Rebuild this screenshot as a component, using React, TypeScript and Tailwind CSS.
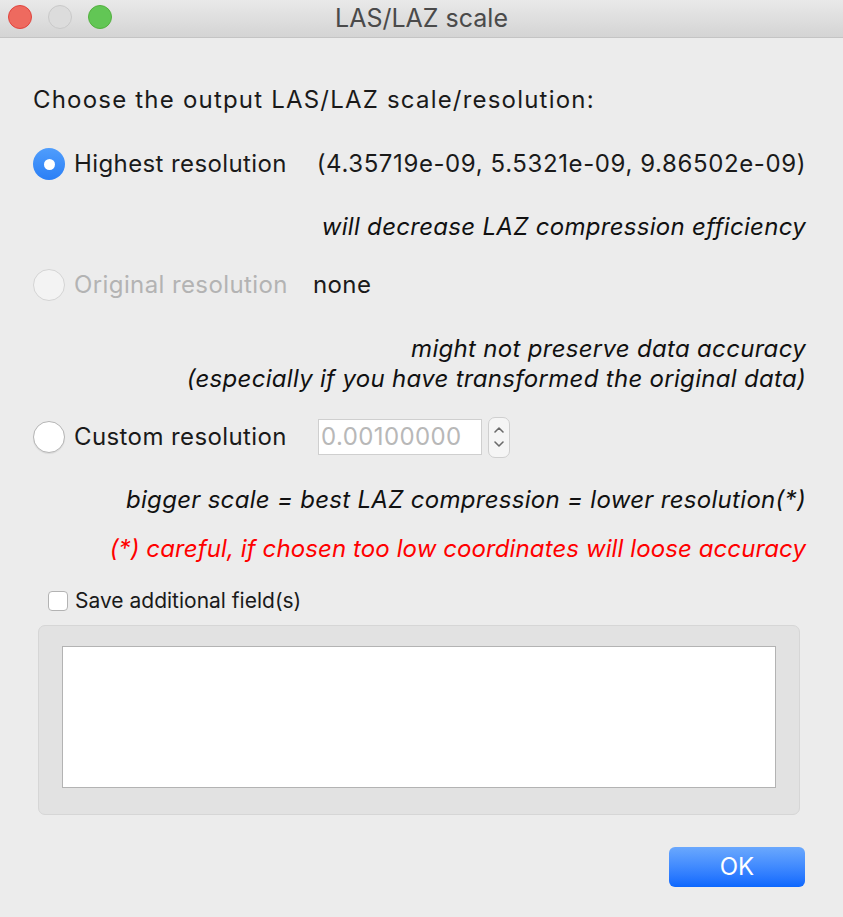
import React from "react";

const FONT = { fontFamily: "Inter, 'Liberation Sans', sans-serif" };

function Radio({ checked, disabled }: { checked?: boolean; disabled?: boolean }) {
  if (checked) {
    return (
      <span className="flex h-[32px] w-[32px] shrink-0 items-center justify-center rounded-full bg-gradient-to-b from-[#4f9dfc] to-[#2a7ff6]">
        <span className="h-[11px] w-[11px] rounded-full bg-white" />
      </span>
    );
  }
  return (
    <span
      className={`h-[32px] w-[32px] shrink-0 rounded-full border ${
        disabled ? "border-[#d4d4d4] bg-[#f3f3f3]" : "border-[#b5b5b5] bg-white shadow-[0_1px_1px_rgba(0,0,0,0.08)]"
      }`}
    />
  );
}

function Note({ children, red }: { children: React.ReactNode; red?: boolean }) {
  return (
    <div
      className={`whitespace-nowrap text-right italic leading-[30px] ${
        red ? "tracking-[0.1px] text-[#ff0000]" : "tracking-[0.3px] text-[#111]"
      }`}
    >
      {children}
    </div>
  );
}

export default function App() {
  return (
    <div className="h-[917px] w-[843px] overflow-hidden bg-[#ececec] text-[24px] tracking-[0.4px] text-[#1a1a1a]" style={FONT}>
      {/* title bar */}
      <div className="relative flex h-[38px] items-center justify-center border-b border-[#c4c4c4] bg-gradient-to-b from-[#e9e9e9] to-[#d4d4d4]">
        <div className="absolute left-[8px] top-[5px] flex gap-[16px]">
          <span className="h-[24px] w-[24px] rounded-full border border-[#e0443e] bg-[#ee6a5f]" />
          <span className="h-[24px] w-[24px] rounded-full border border-[#c9c9c9] bg-[#dcdcdc]" />
          <span className="h-[24px] w-[24px] rounded-full border border-[#53b03f] bg-[#62c655]" />
        </div>
        <span className="text-[25px] tracking-normal text-[#4a4a4a]">LAS/LAZ scale</span>
      </div>

      <div className="pl-[33px] pr-[37px]">
        <div className="mt-[47px] flex h-[30px] items-center tracking-[1.2px]">Choose the output LAS/LAZ scale/resolution:</div>

        {/* highest */}
        <div className="mt-[29px] flex h-[40px] items-center">
          <Radio checked />
          <span className="ml-[9px] w-[243px]">Highest resolution</span>
          <span className="whitespace-nowrap tracking-[0.6px]">(4.35719e-09, 5.5321e-09, 9.86502e-09)</span>
        </div>
        <div className="mt-[28px]">
          <Note>will decrease LAZ compression efficiency</Note>
        </div>

        {/* original */}
        <div className="mt-[23px] flex h-[40px] items-center">
          <Radio disabled />
          <span className="ml-[9px] w-[239px] text-[#b3b3b3]">Original resolution</span>
          <span>none</span>
        </div>
        <div className="mt-[29px]">
          <Note>might not preserve data accuracy</Note>
          <Note>(especially if you have transformed the original data)</Note>
        </div>

        {/* custom */}
        <div className="mt-[23px] flex h-[40px] items-center">
          <Radio />
          <span className="ml-[9px] w-[244px]">Custom resolution</span>
          <div className="flex h-[36px] w-[164px] items-center border border-[#cfcfcf] bg-white px-[2px] text-[#b8b8b8]">
            0.00100000
          </div>
          <div className="ml-[6px] flex h-[41px] w-[22px] flex-col items-center justify-center rounded-[7px] border border-[#cfcfcf] bg-[#f5f5f5]">
            <svg width="12" height="30" viewBox="0 0 12 30" fill="none" stroke="#6a6a6a" strokeWidth="1.6" strokeLinecap="round" strokeLinejoin="round">
              <path d="M2 10 L6 6 L10 10" />
              <path d="M2 20 L6 24 L10 20" />
            </svg>
          </div>
        </div>

        <div className="mt-[28px]">
          <Note>bigger scale = best LAZ compression = lower resolution(*)</Note>
        </div>
        <div className="mt-[19px]">
          <Note red>(*) careful, if chosen too low coordinates will loose accuracy</Note>
        </div>

        {/* checkbox */}
        <div className="mt-[22px] flex h-[30px] items-center pl-[15px] text-[21px] tracking-normal">
          <span className="h-[20px] w-[20px] rounded-[4px] border border-[#b3b3b3] bg-white" />
          <span className="ml-[7px]">Save additional field(s)</span>
        </div>

        {/* group box */}
        <div className="ml-[5px] mr-[6px] mt-[9px] h-[190px] rounded-[7px] border border-[#d6d6d6] bg-[#e2e2e2] px-[23px] pt-[20px]">
          <div className="h-[142px] border border-[#b3b3b3] bg-white" />
        </div>

        <div className="mt-[32px] flex justify-end pr-[1px]">
          <button className="flex h-[40px] w-[136px] items-center justify-center rounded-[6px] bg-gradient-to-b from-[#6aa8fd] to-[#0b67fe] text-[24px] tracking-normal text-white">
            OK
          </button>
        </div>
      </div>
    </div>
  );
}
